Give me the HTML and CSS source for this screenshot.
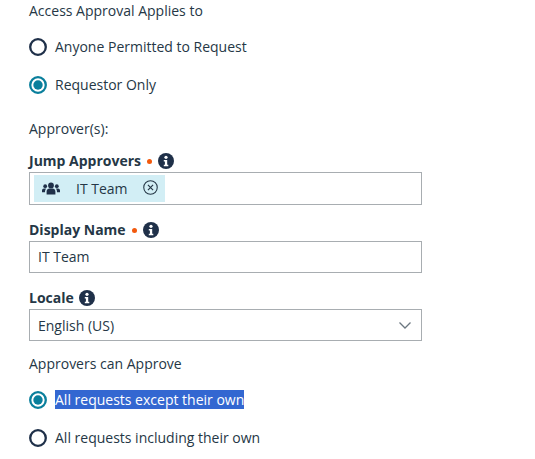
FILE: index.html
```html
<!DOCTYPE html>
<html lang="en">
<head>
    <meta charset="UTF-8">
    <title>Access Approval</title>
    <link rel="stylesheet" href="styles.css">
</head>
<body>
    <form class="form">
        <div class="heading top">Access Approval Applies to</div>
        <div class="radio-row first">
            <svg class="radio" viewBox="0 0 18 18"><circle cx="9" cy="9" r="7.8" fill="#fff" stroke="#1f3049" stroke-width="2.3"/></svg>
            <span>Anyone Permitted to Request</span>
        </div>
        <div class="radio-row">
            <svg class="radio" viewBox="0 0 18 18"><circle cx="9" cy="9" r="7.8" fill="#fff" stroke="#0a7f9c" stroke-width="2.3"/><circle cx="9" cy="9" r="4.7" fill="#0a7f9c"/></svg>
            <span>Requestor Only</span>
        </div>

        <div class="heading approvers">Approver(s):</div>

        <div class="field-label">
            <b>Jump Approvers</b>
            <span class="required"></span>
            <svg class="info" viewBox="0 0 16 16"><circle cx="8" cy="8" r="8" fill="#1f3049"/><circle cx="8" cy="4.3" r="1.6" fill="#fff"/><path d="M5.8 7h3.4v4.8h1.1v1.5H5.8v-1.5h1.1V8.5H5.8z" fill="#fff"/></svg>
        </div>
        <div class="box chip-box">
            <div class="chip">
                <svg class="group-icon" viewBox="0 0 18 13"><circle cx="9" cy="3.4" r="2.9" fill="#1f3049"/><circle cx="3.2" cy="4.2" r="1.9" fill="#1f3049"/><circle cx="14.8" cy="4.2" r="1.9" fill="#1f3049"/><path d="M4.6 12.6V9.8c0-2 1.4-3.2 3-3.2h2.8c1.6 0 3 1.2 3 3.2v2.8z" fill="#1f3049"/><path d="M0 10.2V8.6c0-1.2.9-2.1 2-2.1h2.2c-.8.8-1.2 1.9-1.2 3.7zM18 10.2V8.6c0-1.2-.9-2.1-2-2.1h-2.2c.8.8 1.2 1.9 1.2 3.7z" fill="#1f3049"/></svg>
                <span class="chip-text">IT Team</span>
                <svg class="remove-icon" viewBox="0 0 14 14"><circle cx="7" cy="7" r="6.3" fill="none" stroke="#253746" stroke-width="1"/><path d="M4.6 4.6l4.8 4.8M9.4 4.6l-4.8 4.8" stroke="#253746" stroke-width="1.1" fill="none"/></svg>
            </div>
        </div>

        <div class="field-label next">
            <b>Display Name</b>
            <span class="required"></span>
            <svg class="info" viewBox="0 0 16 16"><circle cx="8" cy="8" r="8" fill="#1f3049"/><circle cx="8" cy="4.3" r="1.6" fill="#fff"/><path d="M5.8 7h3.4v4.8h1.1v1.5H5.8v-1.5h1.1V8.5H5.8z" fill="#fff"/></svg>
        </div>
        <div class="box text-box">IT Team</div>

        <div class="field-label next optional">
            <b>Locale</b>
            <svg class="info" viewBox="0 0 16 16"><circle cx="8" cy="8" r="8" fill="#1f3049"/><circle cx="8" cy="4.3" r="1.6" fill="#fff"/><path d="M5.8 7h3.4v4.8h1.1v1.5H5.8v-1.5h1.1V8.5H5.8z" fill="#fff"/></svg>
        </div>
        <div class="box text-box select-box">
            <span>English (US)</span>
            <svg class="chevron" viewBox="0 0 12 7"><path d="M.5.5L6 6 11.5.5" fill="none" stroke="#6b7780" stroke-width="1.3"/></svg>
        </div>

        <div class="heading can-approve">Approvers can Approve</div>
        <div class="radio-row after-can">
            <svg class="radio" viewBox="0 0 18 18"><circle cx="9" cy="9" r="7.8" fill="#fff" stroke="#0a7f9c" stroke-width="2.3"/><circle cx="9" cy="9" r="4.7" fill="#0a7f9c"/></svg>
            <span class="selected">All requests except their own</span>
        </div>
        <div class="radio-row">
            <svg class="radio" viewBox="0 0 18 18"><circle cx="9" cy="9" r="7.8" fill="#fff" stroke="#1f3049" stroke-width="2.3"/></svg>
            <span>All requests including their own</span>
        </div>
    </form>
</body>
</html>
```

FILE: styles.css
```css
body {
    font-family: "Open Sans", "Liberation Sans", sans-serif;
    font-size: 14px;
    line-height: 20px;
    margin: 0;
    background-color: #fff;
    color: #253746;
}
.form {
    width: 393px;
    padding-left: 29px;
}
.heading {
    height: 20px;
}
.heading.top {
    padding-top: 1px;
}
.approvers {
    margin-top: 24px;
}
.can-approve {
    margin-top: 13px;
}
.radio-row {
    display: flex;
    align-items: center;
    gap: 8px;
    height: 20px;
    margin-top: 18px;
}
.radio-row.first {
    margin-top: 16px;
}
.radio-row.after-can {
    margin-top: 16px;
}
.radio {
    width: 18px;
    height: 18px;
}
.selected {
    align-self: flex-start;
    background-color: #3367d1;
    color: #fff;
    line-height: 19px;
}
.field-label {
    display: flex;
    align-items: center;
    height: 20px;
    margin-top: 12px;
    margin-bottom: 1px;
}
.field-label.next {
    margin-top: 15px;
}
.required {
    width: 5px;
    height: 5px;
    margin-left: 6px;
    border-radius: 50%;
    background-color: #f2590d;
}
.info {
    width: 16px;
    height: 16px;
    margin-left: 6px;
}
.optional .info {
    margin-left: 5px;
}
.box {
    box-sizing: border-box;
    border: 1px solid #a8adb1;
    background-color: #fff;
}
.chip-box {
    height: 33px;
    padding: 2px 4px;
}
.chip {
    display: flex;
    align-items: center;
    width: 131px;
    height: 27px;
    background-color: #d2eef5;
}
.group-icon {
    width: 18px;
    height: 13px;
    margin-left: 8px;
}
.chip-text {
    margin-left: 16px;
}
.remove-icon {
    width: 15px;
    height: 15px;
    margin-left: 15px;
    margin-top: -3px;
}
.text-box {
    display: flex;
    align-items: center;
    height: 32px;
    padding-left: 8px;
}
.select-box {
    justify-content: space-between;
    padding-right: 10px;
    padding-top: 1px;
}
.chevron {
    width: 12px;
    height: 7px;
}
```
